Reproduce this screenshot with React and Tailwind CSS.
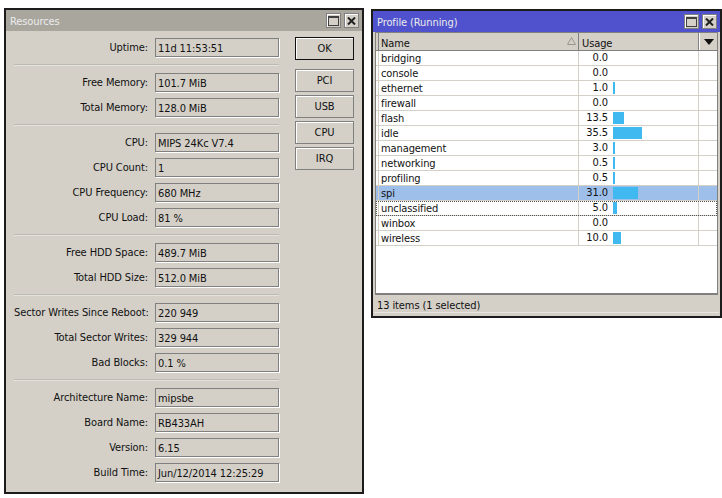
const sections = [
  [['Uptime', '11d 11:53:51']],
  [['Free Memory', '101.7 MiB'], ['Total Memory', '128.0 MiB']],
  [['CPU', 'MIPS 24Kc V7.4'], ['CPU Count', '1'], ['CPU Frequency', '680 MHz'], ['CPU Load', '81 %']],
  [['Free HDD Space', '489.7 MiB'], ['Total HDD Size', '512.0 MiB']],
  [['Sector Writes Since Reboot', '220 949'], ['Total Sector Writes', '329 944'], ['Bad Blocks', '0.1 %']],
  [['Architecture Name', 'mipsbe'], ['Board Name', 'RB433AH'], ['Version', '6.15'], ['Build Time', 'Jun/12/2014 12:25:29']],
];

const profile = [
  ['bridging', 0], ['console', 0], ['ethernet', 1], ['firewall', 0], ['flash', 13.5], ['idle', 35.5],
  ['management', 3], ['networking', 0.5], ['profiling', 0.5], ['spi', 31], ['unclassified', 5], ['winbox', 0], ['wireless', 10],
];

function TitleButtons() {
  return (
    <div className="flex gap-[3px]">
      <div className="w-[15px] h-[15px] bg-[#d4d0c8] border border-[#808080] shadow-[inset_1px_1px_0_#fff] flex items-center justify-center">
        <div className="w-[11px] h-[10px] border border-[#404040] border-t-2" />
      </div>
      <div className="w-[15px] h-[15px] bg-[#d4d0c8] border border-[#808080] shadow-[inset_1px_1px_0_#fff] flex items-center justify-center">
        <svg width="9" height="8" viewBox="0 0 9 8">
          <path d="M1 0.5 L8 7.5 M8 0.5 L1 7.5" stroke="#202020" strokeWidth="2" />
        </svg>
      </div>
    </div>
  );
}

function Window({ title, titleBg, className, children }) {
  return (
    <div className={`flex flex-col border-2 border-[#1c1c1c] bg-[#d4d0c8] ${className}`}>
      <div className={`h-[21px] flex items-center justify-between pl-[4px] pr-[3px] text-[#ececec] shrink-0 ${titleBg}`}>
        <span className="pt-[4px]">{title}</span>
        <TitleButtons />
      </div>
      {children}
    </div>
  );
}

function ActionButton({ label, active }) {
  const border = active ? 'border-[#101010]' : 'border-[#808080]';
  return (
    <button className={`w-[59px] h-[23px] pt-[2px] border ${border} shadow-[inset_1px_1px_0_#fff] text-[#111] bg-[#d4d0c8]`}>
      {label}
    </button>
  );
}

function Resources() {
  return (
    <Window title="Resources" titleBg="bg-[#a9a69e]" className="w-[360px] h-[486px]">
      <div className="flex pt-[7px] pl-[8px]">
        <div className="w-[265px] flex flex-col">
          {sections.map((rows, i) => (
            <div key={i}>
              {i > 0 && <div className="my-[7px] h-[2px] bg-[#bdbab2] border-b border-[#e4e2dc]" />}
              <div className="flex flex-col gap-[6px]">
                {rows.map(([label, value]) => (
                  <div key={label} className="flex items-center h-[19px]">
                    <div className="w-[134px] pt-[2px] text-right text-[#111] whitespace-nowrap">{label}:</div>
                    <div className="ml-[7px] w-[124px] h-[19px] leading-[19px] pl-[2px] border border-[#808080] shadow-[1px_1px_0_#fff] text-[#111] whitespace-nowrap">
                      {value}
                    </div>
                  </div>
                ))}
              </div>
            </div>
          ))}
        </div>
        <div className="ml-[16px] -mt-[1px] flex flex-col gap-[3px]">
          <div className="mb-[6px]"><ActionButton label="OK" active /></div>
          <ActionButton label="PCI" />
          <ActionButton label="USB" />
          <ActionButton label="CPU" />
          <ActionButton label="IRQ" />
        </div>
      </div>
    </Window>
  );
}

function ProfileRow({ name, usage }) {
  const selected = name === 'spi';
  const focused = name === 'unclassified';
  const bg = selected ? 'bg-[#9dbfe9]' : 'bg-white';
  const outline = focused ? 'outline-1 outline-dotted outline-[#555] -outline-offset-1' : '';
  return (
    <div className={`flex h-[15px] leading-[16px] border-b border-[#d4d0c8] text-[#111] ${bg} ${outline}`}>
      <div className="w-[3px] border-r border-[#d4d0c8] shrink-0" />
      <div className="w-[200px] pl-[2px] border-r border-[#d4d0c8] shrink-0">{name}</div>
      <div className="w-[120px] border-r border-[#d4d0c8] shrink-0 flex items-center">
        <div className="w-[29px] text-right shrink-0">{usage.toFixed(1)}</div>
        <div className="ml-[5px] h-[12px] bg-[#40b9f0]" style={{ width: usage > 0 ? Math.max(2, Math.round(usage * 0.81)) : 0 }} />
      </div>
    </div>
  );
}

function Profile() {
  return (
    <Window title="Profile (Running)" titleBg="bg-[#4f52cc]" className="w-[351px] h-[309px] mt-[1px]">
      <div className="flex-1 flex flex-col mx-[2px] border-x border-t border-b-2 border-[#808080] bg-white overflow-hidden">
        <div className="flex h-[18px] leading-[21px] bg-[#d4d0c8] border-b border-[#808080] text-[#111] shrink-0">
          <div className="w-[3px] border-r border-[#808080] shrink-0" />
          <div className="w-[200px] pl-[2px] border-r border-[#808080] shrink-0 flex justify-between pr-[2px]">
            <span>Name</span>
            <svg className="mt-[4px]" width="9" height="8" viewBox="0 0 9 8">
              <path d="M4.5 0.5 L8.5 7.5 H0.5 Z" fill="none" stroke="#9a978f" />
            </svg>
          </div>
          <div className="w-[120px] pl-[3px] border-r border-[#808080] shrink-0">Usage</div>
          <div className="flex-1 flex items-center justify-center border-l border-white">
            <svg width="10" height="6" viewBox="0 0 10 6">
              <path d="M0 0 H10 L5 6 Z" fill="#111" />
            </svg>
          </div>
        </div>
        {profile.map(([name, usage]) => (
          <ProfileRow key={name} name={name} usage={usage} />
        ))}
      </div>
      <div className="h-[18px] leading-[21px] pl-[3px] mx-[1px] mb-[3px] text-[#111] border-b border-[#e8e6e0] shrink-0">
        13 items (1 selected)
      </div>
    </Window>
  );
}

export default function App() {
  return (
    <div className="w-[722px] h-[498px] bg-white flex items-start gap-[7px] pt-[8px] pl-[4px] text-[11px] tracking-[-0.1px] font-['DejaVu_Sans_Condensed','Liberation_Sans',Arial,sans-serif]">
      <Resources />
      <Profile />
    </div>
  );
}
